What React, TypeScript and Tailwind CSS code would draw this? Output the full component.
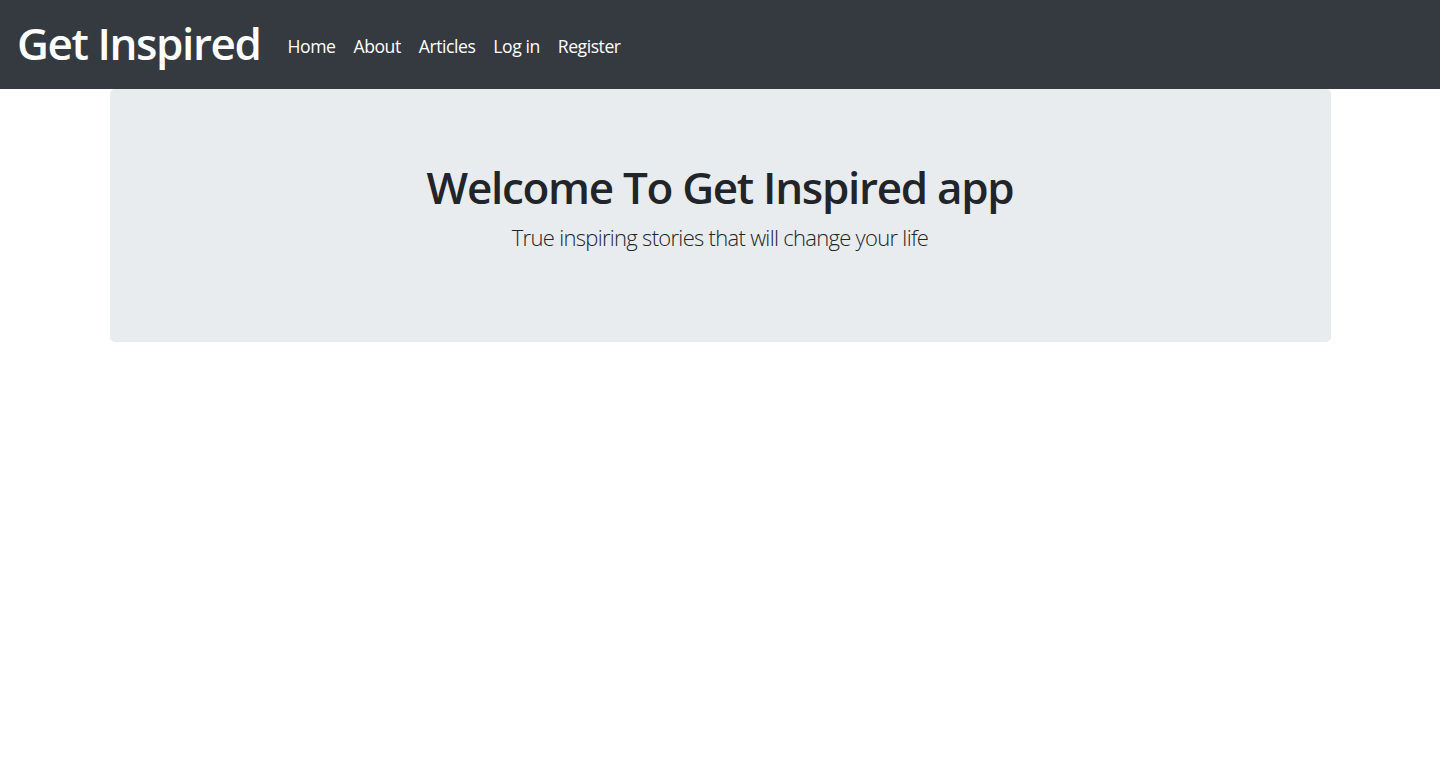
import React from "react";

export default function App() {
  const font = { fontFamily: '"Open Sans", "Noto Sans", sans-serif' };
  return (
    <div className="min-h-[757px] bg-white" style={font}>
      <nav className="h-[89px] bg-[#343a40] flex items-center pl-[17px] pr-[18px]">
        <a className="text-white text-[44px] font-semibold leading-none mr-[18px] tracking-[-1.4px] pb-[4px]" href="#">
          Get Inspired
        </a>
        <ul className="flex items-center">
          {["Home", "About", "Articles", "Log in", "Register"].map((l) => (
            <li key={l}>
              <a className="block px-[9px] text-white text-[17.6px] tracking-[-0.45px] leading-[26px] pt-[2px]" href="#">
                {l}
              </a>
            </li>
          ))}
        </ul>
      </nav>
      <div className="w-[1221px] mx-auto">
        <div className="bg-[#e9ecef] rounded-[5px] h-[253px] pt-[72px] flex flex-col items-center">
          <h1 className="text-[44px] font-semibold leading-[53px] text-[#212529] mb-[7px] tracking-[-1.3px]">
            Welcome To Get Inspired app
          </h1>
          <p className="text-[22px] font-light leading-[33px] text-[#212529] tracking-[-0.7px]">
            True inspiring stories that will change your life
          </p>
        </div>
      </div>
    </div>
  );
}
